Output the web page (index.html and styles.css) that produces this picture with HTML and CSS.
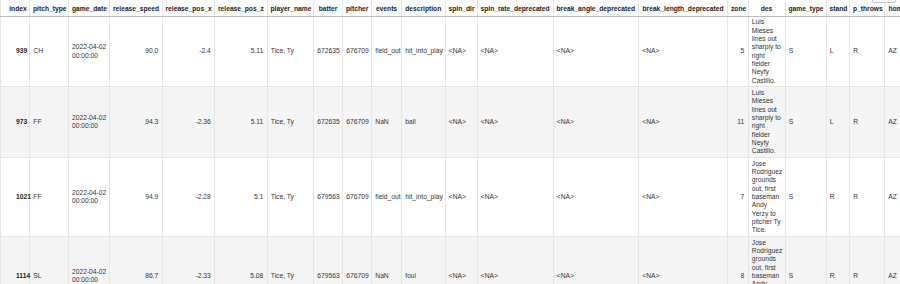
FILE: index.html
```html
<!DOCTYPE html>
<html>
<head>
<meta charset="utf-8">
<link rel="stylesheet" href="styles.css">
</head>
<body>
<div class="frame">
  <div class="tab-stub"></div>
  <table class="df">
    <colgroup>
      <col class="w-index"><col class="w-pitch"><col class="w-date"><col class="w-rel"><col class="w-rel"><col class="w-rel"><col class="w-player"><col class="w-batter"><col class="w-batter"><col class="w-events"><col class="w-desc"><col class="w-spin"><col class="w-rate"><col class="w-angle"><col class="w-length"><col class="w-zone"><col class="w-des"><col class="w-gtype"><col class="w-stand"><col class="w-throws"><col class="w-team"><col class="w-team">
    </colgroup>
    <thead>
      <tr>
        <th class="h-index">index</th><th>pitch_type</th><th>game_date</th><th>release_speed</th><th>release_pos_x</th><th>release_pos_z</th><th>player_name</th><th>batter</th><th>pitcher</th><th>events</th><th>description</th><th>spin_dir</th><th>spin_rate_deprecated</th><th>break_angle_deprecated</th><th>break_length_deprecated</th><th>zone</th><th>des</th><th>game_type</th><th>stand</th><th>p_throws</th><th>home_team</th><th>away_team</th>
      </tr>
    </thead>
    <tbody>
      <tr>
        <th class="idx">939</th><td>CH</td><td class="date"><span class="nw">2022-04-02</span> <span class="nw">00:00:00</span></td><td class="num">90.0</td><td class="num">-2.4</td><td class="num">5.11</td><td>Tice, Ty</td><td class="num">672635</td><td class="num">676709</td><td>field_out</td><td>hit_into_play</td><td>&lt;NA&gt;</td><td>&lt;NA&gt;</td><td>&lt;NA&gt;</td><td>&lt;NA&gt;</td><td class="num">5</td><td>Luis Mieses lines out sharply to right fielder Neyfy Castillo.</td><td>S</td><td>L</td><td>R</td><td>AZ</td><td>KC</td>
      </tr>
      <tr>
        <th class="idx">973</th><td>FF</td><td class="date"><span class="nw">2022-04-02</span> <span class="nw">00:00:00</span></td><td class="num">94.3</td><td class="num">-2.36</td><td class="num">5.11</td><td>Tice, Ty</td><td class="num">672635</td><td class="num">676709</td><td>NaN</td><td>ball</td><td>&lt;NA&gt;</td><td>&lt;NA&gt;</td><td>&lt;NA&gt;</td><td>&lt;NA&gt;</td><td class="num">11</td><td>Luis Mieses lines out sharply to right fielder Neyfy Castillo.</td><td>S</td><td>L</td><td>R</td><td>AZ</td><td>KC</td>
      </tr>
      <tr>
        <th class="idx">1021</th><td>FF</td><td class="date"><span class="nw">2022-04-02</span> <span class="nw">00:00:00</span></td><td class="num">94.9</td><td class="num">-2.28</td><td class="num">5.1</td><td>Tice, Ty</td><td class="num">679563</td><td class="num">676709</td><td>field_out</td><td>hit_into_play</td><td>&lt;NA&gt;</td><td>&lt;NA&gt;</td><td>&lt;NA&gt;</td><td>&lt;NA&gt;</td><td class="num">7</td><td>Jose Rodriguez grounds out, first baseman Andy Yerzy to pitcher Ty Tice.</td><td>S</td><td>R</td><td>R</td><td>AZ</td><td>KC</td>
      </tr>
      <tr>
        <th class="idx">1114</th><td>SL</td><td class="date"><span class="nw">2022-04-02</span> <span class="nw">00:00:00</span></td><td class="num">86.7</td><td class="num">-2.33</td><td class="num">5.08</td><td>Tice, Ty</td><td class="num">679563</td><td class="num">676709</td><td>NaN</td><td>foul</td><td>&lt;NA&gt;</td><td>&lt;NA&gt;</td><td>&lt;NA&gt;</td><td>&lt;NA&gt;</td><td class="num">8</td><td>Jose Rodriguez grounds out, first baseman Andy Yerzy to pitcher Ty Tice.</td><td>S</td><td>R</td><td>R</td><td>AZ</td><td>KC</td>
      </tr>
    </tbody>
  </table>
</div>
</body>
</html>
```

FILE: styles.css
```css
html, body {
  margin: 0;
  padding: 0;
  background: #fff;
  overflow: hidden;
}

.frame {
  position: relative;
  width: 900px;
  height: 284px;
  overflow: hidden;
}

.tab-stub {
  position: absolute;
  top: -8px;
  left: 872px;
  width: 22px;
  height: 9px;
  border: 1px solid #c8c8c8;
  border-radius: 2px;
  background: #fff;
}

.df {
  border-collapse: collapse;
  table-layout: fixed;
  width: 974px;
  font-family: "Liberation Sans", Arial, sans-serif;
  font-size: 6.7px;
  line-height: 8.33px;
  color: #333;
}

.w-index { width: 29px; }
.w-pitch { width: 39px; }
.w-date { width: 41px; }
.w-rel { width: 52.5px; }
.w-player { width: 46.5px; }
.w-batter { width: 29px; }
.w-events { width: 30px; }
.w-desc { width: 43.5px; }
.w-spin { width: 32px; }
.w-rate { width: 76px; }
.w-angle { width: 85.5px; }
.w-length { width: 89px; }
.w-zone { width: 20.5px; }
.w-des { width: 37px; }
.w-gtype { width: 41px; }
.w-stand { width: 23.5px; }
.w-throws { width: 35px; }
.w-team { width: 45px; }

.df th,
.df td {
  border-left: 1px solid #e6e6e6;
  border-right: 1px solid #e6e6e6;
  padding: 1.5px 3.3px;
  vertical-align: middle;
  white-space: normal;
}

.df thead th {
  font-weight: bold;
  color: #222;
  text-align: center;
  white-space: nowrap;
  padding: 5px 3px 2.5px;
  border-bottom: 1px solid #bdbdbd;
}

.df thead th.h-index {
  text-align: right;
  padding-right: 2.3px;
}

.df tbody tr {
  border-bottom: 1px solid #e6e6e6;
}

.df tbody tr:nth-child(even) {
  background: #f5f5f5;
}

.df td {
  text-align: left;
}

.df td.num {
  text-align: right;
}

.df td.date {
  padding-left: 3px;
  padding-right: 2px;
}

.nw {
  white-space: nowrap;
}

.df th.idx {
  font-weight: bold;
  color: #222;
  text-align: left;
  padding-left: 15px;
  padding-right: 1px;
}
```
